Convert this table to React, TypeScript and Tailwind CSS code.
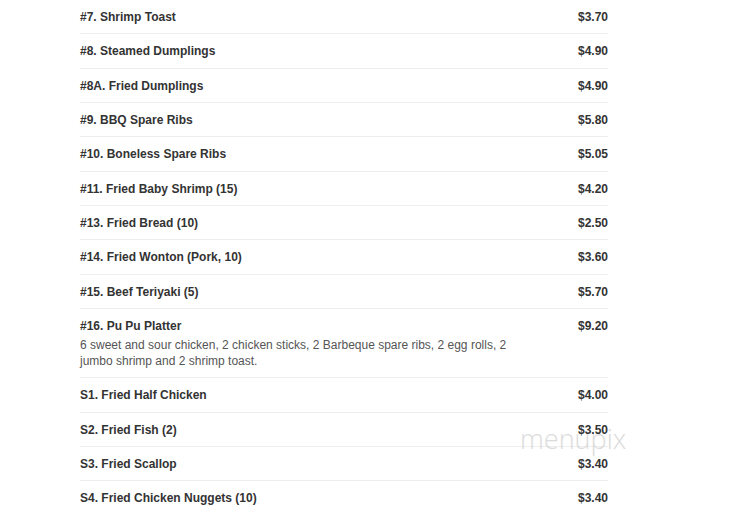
const items: { name: string; price: string; desc?: string }[] = [
  { name: "#7. Shrimp Toast", price: "$3.70" },
  { name: "#8. Steamed Dumplings", price: "$4.90" },
  { name: "#8A. Fried Dumplings", price: "$4.90" },
  { name: "#9. BBQ Spare Ribs", price: "$5.80" },
  { name: "#10. Boneless Spare Ribs", price: "$5.05" },
  { name: "#11. Fried Baby Shrimp (15)", price: "$4.20" },
  { name: "#13. Fried Bread (10)", price: "$2.50" },
  { name: "#14. Fried Wonton (Pork, 10)", price: "$3.60" },
  { name: "#15. Beef Teriyaki (5)", price: "$5.70" },
  {
    name: "#16. Pu Pu Platter",
    price: "$9.20",
    desc: "6 sweet and sour chicken, 2 chicken sticks, 2 Barbeque spare ribs, 2 egg rolls, 2 jumbo shrimp and 2 shrimp toast.",
  },
  { name: "S1. Fried Half Chicken", price: "$4.00" },
  { name: "S2. Fried Fish (2)", price: "$3.50" },
  { name: "S3. Fried Scallop", price: "$3.40" },
  { name: "S4. Fried Chicken Nuggets (10)", price: "$3.40" },
];

export default function App() {
  return (
    <div className="relative h-[520px] w-[754px] overflow-hidden bg-white font-['Liberation_Sans',Arial,sans-serif] text-[#333]">
      <div className="ml-[80px] w-[528px]">
        {items.map((item) => (
          <div
            key={item.name}
            className="flex justify-between border-b border-[#eeeeee] pt-[11px] pb-[9px] last:border-b-0"
          >
            <div className="w-[436px]">
              <div className="text-[12px] font-bold leading-[13.33px]">{item.name}</div>
              {item.desc && (
                <p className="mt-[4px] mb-[-1px] text-[12px] leading-[16px] text-[#555]">{item.desc}</p>
              )}
            </div>
            <div className="text-[12px] font-bold leading-[13.33px]">{item.price}</div>
          </div>
        ))}
      </div>
      <div className="pointer-events-none absolute left-[520px] top-[419px] font-['Open_Sans',sans-serif] text-[27px] font-light text-[#d4d4d4] opacity-80">
        menupix
      </div>
    </div>
  );
}
